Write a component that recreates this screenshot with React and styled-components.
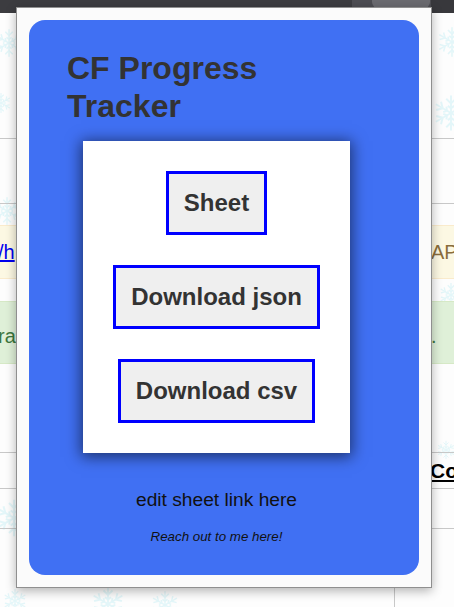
import React from "react";
import styled, { createGlobalStyle } from "styled-components";

const GlobalStyle = createGlobalStyle`
  html, body {
    margin: 0;
    padding: 0;
  }
  body {
    font-family: "Liberation Sans", Arial, sans-serif;
    background: #fff;
    overflow: hidden;
  }
  * {
    box-sizing: border-box;
  }
`;

const flakes = [
  { x: -6, y: 28, s: 30 },
  { x: -10, y: 92, s: 22 },
  { x: 436, y: 26, s: 32 },
  { x: 432, y: 94, s: 38 },
  { x: -8, y: 196, s: 30 },
  { x: 438, y: 282, s: 26 },
  { x: -6, y: 498, s: 40 },
  { x: 90, y: 586, s: 36 },
  { x: 150, y: 590, s: 30 },
  { x: 2, y: 588, s: 26 },
  { x: 436, y: 440, s: 20 },
];

const Snowflake = ({ x, y, s }) => (
  <FlakeSvg $x={x} $y={y} width={s} height={s} viewBox="-12 -12 24 24">
    {[0, 60, 120].map((a) => (
      <g key={a} transform={`rotate(${a})`}>
        <line x1="0" y1="-11" x2="0" y2="11" />
        <path d="M-3 -9 L0 -6 L3 -9 M-3 9 L0 6 L3 9 M-2 -4.5 L0 -3 L2 -4.5 M-2 4.5 L0 3 L2 4.5" />
      </g>
    ))}
  </FlakeSvg>
);

const App = () => {
  return (
    <>
      <GlobalStyle />
      <Screen>
        <TopBar>
          <BarLeft />
          <BarTools>
            <BarTab />
          </BarTools>
          <BarRight />
        </TopBar>

        <Page>
          {flakes.map((f, i) => (
            <Snowflake key={i} {...f} />
          ))}
          <Rule $mt={125} />
          <Rule $mt={64} />
          <Alert $variant="warning" $mt={21}>
            <AlertLeft>
              <SheetLink>/h</SheetLink>
            </AlertLeft>
            <AlertRight>API key saved</AlertRight>
          </Alert>
          <Alert $variant="success" $mt={22}>
            <AlertLeft>ra</AlertLeft>
            <AlertRight>.</AlertRight>
          </Alert>
          <Rule $mt={88} />
          <HeadRow>
            <span />
            <HeadLink>Code</HeadLink>
          </HeadRow>
          <Rule />
          <TableRow $h={40} />
          <Rule />
          <TableRow $h={80} />
        </Page>

        <Popup>
          <Card>
            <Title>CF Progress Tracker</Title>
            <ButtonBox>
              <ActionButton>Sheet</ActionButton>
              <ActionButton>Download json</ActionButton>
              <ActionButton>Download csv</ActionButton>
            </ButtonBox>
            <EditLink>edit sheet link here</EditLink>
            <Reach>Reach out to me here!</Reach>
          </Card>
        </Popup>
      </Screen>
    </>
  );
};

const Screen = styled.div`
  position: relative;
  width: 454px;
  height: 607px;
  overflow: hidden;
  background: #fff;
`;

const TopBar = styled.div`
  display: flex;
  height: 13px;
  background: #3a3a3e;
`;

const BarLeft = styled.div`
  width: 352px;
  height: 13px;
  background: #3c3c40;
  border-bottom-right-radius: 7px;
`;

const BarTools = styled.div`
  width: 79px;
  height: 13px;
  padding-left: 20px;
  background: #4d4d52;
`;

const BarTab = styled.div`
  width: 58px;
  height: 8px;
  background: #6b6b70;
  border-radius: 0 0 6px 6px;
`;

const BarRight = styled.div`
  flex: 1;
  background: #38383c;
`;

const Page = styled.div`
  position: relative;
  display: flex;
  flex-direction: column;
  height: 594px;
  background: #fdfdfd;
  font-size: 20px;
`;

const FlakeSvg = styled.svg`
  position: absolute;
  left: ${(p) => p.$x}px;
  top: ${(p) => p.$y - 13}px;
  stroke: #d3f3f7;
  stroke-width: 1.2;
  fill: none;
  opacity: 0.6;
`;

const Rule = styled.div`
  position: relative;
  height: 1px;
  margin-top: ${(p) => p.$mt || 0}px;
  background: #c8c8c8;
`;

const alertColors = {
  warning: { bg: "#fcf8e3", border: "#faebcc", text: "#8a6d3b" },
  success: { bg: "#dff0d8", border: "#d6e9c6", text: "#3c763d" },
};

const Alert = styled.div`
  position: relative;
  display: grid;
  grid-template-columns: 431px 1fr;
  margin-top: ${(p) => p.$mt}px;
  padding: ${(p) => (p.$variant === "success" ? "23px 0 15px" : "15px 0")};
  line-height: 23px;
  white-space: nowrap;
  overflow: hidden;
  background: ${(p) => alertColors[p.$variant].bg};
  border-top: 1px solid ${(p) => alertColors[p.$variant].border};
  border-bottom: 1px solid ${(p) => alertColors[p.$variant].border};
  color: ${(p) => alertColors[p.$variant].text};
`;

const AlertLeft = styled.div`
  text-indent: -2px;
`;

const AlertRight = styled.div`
  overflow: hidden;
`;

const SheetLink = styled.a`
  color: #0000ee;
  text-decoration: underline;
`;

const HeadRow = styled.div`
  position: relative;
  display: grid;
  grid-template-columns: 430px 1fr;
  height: 36px;
  padding-top: 6px;
  line-height: 24px;
  white-space: nowrap;
  overflow: hidden;
`;

const HeadLink = styled.span`
  font-size: 21px;
  font-weight: 700;
  color: #000;
  text-decoration: underline;
`;

const TableRow = styled.div`
  position: relative;
  height: ${(p) => p.$h}px;
  margin-left: 394px;
  border-left: 1px solid #c8c8c8;
`;

const Popup = styled.div`
  position: absolute;
  top: 7px;
  left: 16px;
  width: 416px;
  height: 581px;
  padding: 12px;
  background: #fbfbfb;
  border: 1px solid #8f8f8f;
  box-shadow: 0 3px 10px rgba(0, 0, 0, 0.3);
`;

const Card = styled.div`
  display: flex;
  flex-direction: column;
  height: 555px;
  padding: 30px 53px 30px 38px;
  background: #4070f3;
  border-radius: 16px;
`;

const Title = styled.h1`
  margin: 0;
  font-size: 32px;
  line-height: 37.7px;
  font-weight: 700;
  color: #333;
`;

const ButtonBox = styled.div`
  display: flex;
  flex-direction: column;
  align-items: center;
  gap: 30px;
  width: 267px;
  margin: 16px auto 0;
  padding: 30px 0;
  background: #fff;
  box-shadow: 0 2px 14px 2px rgba(0, 0, 0, 0.55);
`;

const ActionButton = styled.button`
  padding: 15px;
  font-family: "Liberation Sans", Arial, sans-serif;
  font-size: 24px;
  line-height: 28px;
  font-weight: 700;
  color: #333;
  background: #efefef;
  border: 3px solid #0000ff;
  cursor: pointer;
`;

const EditLink = styled.p`
  margin: 36px 0 0;
  font-size: 19.2px;
  line-height: 22px;
  text-align: center;
  color: #111;
`;

const Reach = styled.p`
  margin: 18px 0 0;
  font-size: 13.33px;
  line-height: 15.3px;
  font-style: italic;
  text-align: center;
  color: #111;
`;

export default App;
